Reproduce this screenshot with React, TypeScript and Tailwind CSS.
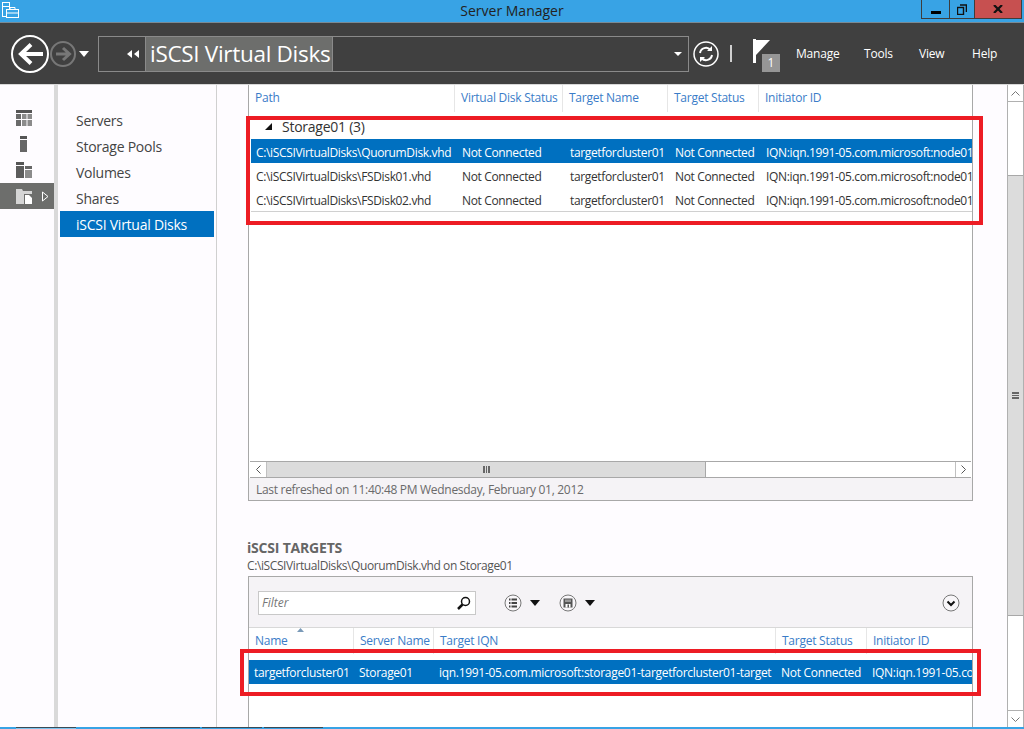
import React from "react";

const F = { fontFamily: '"Open Sans","Noto Sans",sans-serif' };

const IQN = "IQN:iqn.1991-05.com.microsoft:node01.contoso.com";

function Row1({ path, selected }: { path: string; selected?: boolean }) {
  return (
    <div className={selected ? "flex h-6 pt-[3px] items-center bg-[#0070c0] text-white text-[12px] tracking-[-0.35px]" : "flex h-6 pt-[3px] items-center text-[#333333] text-[12px] tracking-[-0.35px]"}>
      <div className="w-[210px] shrink-0 pl-[5px] whitespace-nowrap overflow-hidden">{path}</div>
      <div className="w-[108px] shrink-0 pl-[1px] whitespace-nowrap overflow-hidden">Not Connected</div>
      <div className="w-[105px] shrink-0 pl-[1px] whitespace-nowrap overflow-hidden">targetforcluster01</div>
      <div className="w-[91px] shrink-0 pl-[1px] whitespace-nowrap overflow-hidden">Not Connected</div>
      <div className="flex-1 min-w-0 pl-[1px] whitespace-nowrap overflow-hidden">{IQN}</div>
    </div>
  );
}

function CircleIcon({ children }: { children: React.ReactNode }) {
  return (
    <svg width="18" height="18" viewBox="0 0 18 18" fill="none" className="block">
      <circle cx="9" cy="9" r="8" stroke="#777" strokeWidth="1" fill="#f8f6f9" />
      {children}
    </svg>
  );
}

const Caret = () => (
  <svg width="10" height="6" viewBox="0 0 10 6" className="block"><path d="M0 0h10L5 6z" fill="#111" /></svg>
);

export default function App() {
  return (
    <div style={F} className="w-[1024px] h-[729px] overflow-hidden flex flex-col bg-[#fefcff] relative">
      {/* Title bar */}
      <div className="h-[22px] bg-[#38a3e5] flex items-start relative shrink-0">
        <svg className="ml-[2px] mt-[2px]" width="17" height="16" viewBox="0 0 17 16" fill="none" stroke="#fff" strokeWidth="1">
          <rect x="0.5" y="0.5" width="7" height="4" />
          <rect x="0.5" y="4.5" width="7" height="10" />
          <rect x="4.5" y="7.5" width="12" height="8" fill="#38a3e5" />
          <path d="M8 7.500V5.500h5v2M4.500 11h12" />
        </svg>
        <div className="flex-1 text-center text-[14px] leading-[22px] text-[#222222] pl-[84px]">Server Manager</div>
        <div className="flex h-[19px] mr-[2px] border border-t-0 border-[#3d3d3d] shrink-0 w-[101px]">
          <div className="w-[28px] bg-[#38a3e5] border-r border-[#3d3d3d] flex items-end justify-center pb-[4px]">
            <div className="w-[10px] h-[3px] bg-black" />
          </div>
          <div className="w-[25px] bg-[#38a3e5] border-r border-[#3d3d3d] flex items-center justify-center">
            <svg width="10" height="11" viewBox="0 0 10 11" fill="none" stroke="#111"><rect x="0.500" y="3.500" width="6" height="7" strokeWidth="1.400" /><path d="M3 1h6.500v7" strokeWidth="1.600" /></svg>
          </div>
          <div className="flex-1 bg-[#c75050] flex items-center justify-center">
            <svg width="10" height="8" viewBox="0 0 10 8" stroke="#111" strokeWidth="2.200"><path d="M1 0l8 8M9 0L1 8" /></svg>
          </div>
        </div>
      </div>

      {/* Nav bar */}
      <div className="h-[62px] bg-[#404040] border-t border-[#7a8a94] flex items-center shrink-0 text-white">
        <svg className="ml-[11px]" width="38" height="38" viewBox="0 0 38 38" fill="none">
          <circle cx="19" cy="19" r="18" stroke="#fff" strokeWidth="2" />
          <path d="M32 19H11M20 9.500 10 19l10 9.500" stroke="#fff" strokeWidth="4" />
        </svg>
        <svg className="ml-[1px]" width="26" height="26" viewBox="0 0 26 26" fill="none">
          <circle cx="13" cy="13" r="12" stroke="#777" strokeWidth="2" />
          <path d="M6 13h13M13 7l6.500 6-6.500 6" stroke="#777" strokeWidth="3" />
        </svg>
        <svg className="ml-[3px]" width="10" height="6" viewBox="0 0 10 6"><path d="M0 0h10L5 6z" fill="#fff" /></svg>
        <div className="ml-[9px] w-[591px] h-[36px] border border-[#8a8a8a] flex items-stretch">
          <div className="w-[47px] flex items-center justify-end pr-[5px] border-r border-[#8a8a8a]">
            <svg width="13" height="8" viewBox="0 0 13 8"><path d="M5 0v8L0 4zM12 0v8L7 4z" fill="#fff" /></svg>
          </div>
          <div className="w-[187px] bg-[#6d6e6c] text-[22.5px] leading-[34px] pl-[4px] whitespace-nowrap tracking-[-0.3px] text-white border-r border-[#8a8a8a]">iSCSI Virtual Disks</div>
          <div className="flex-1 flex items-center justify-end pr-[6px]">
            <svg width="8" height="4" viewBox="0 0 8 4"><path d="M0 0h8L4 4z" fill="#fff" /></svg>
          </div>
        </div>
        <svg className="ml-[4px]" width="26" height="26" viewBox="0 0 26 26" fill="none" stroke="#fff">
          <circle cx="13" cy="13" r="12" strokeWidth="1.500" />
          <path d="M7 12a6 6 0 0 1 10.500-3M19 14a6 6 0 0 1-10.500 3" strokeWidth="2" />
          <path d="M19 5v5h-5zM7 21v-5h5z" fill="#fff" stroke="none" />
        </svg>
        <div className="ml-[11px] w-[2px] h-[17px] bg-[#d0d0d0]" />
        <div className="ml-[21px] relative w-[28px] h-[36px] self-end mb-[9px]">
          <svg width="18" height="24" viewBox="0 0 18 24" className="absolute left-0 top-0">
            <rect width="3" height="24" x="0" y="0" fill="#fff" />
            <path d="M3 1h14L3 16z" fill="#fff" />
          </svg>
          <div className="absolute left-[9px] top-[15px] w-[18px] h-[18px] bg-[#969696] text-white text-[12px] leading-[18px] text-center">1</div>
        </div>
        <div className="ml-[15px] text-[12px] tracking-[-0.2px] w-[68px]">Manage</div>
        <div className="text-[12px] tracking-[-0.2px] w-[55px]">Tools</div>
        <div className="text-[12px] tracking-[-0.2px] w-[53px]">View</div>
        <div className="text-[12px] tracking-[-0.2px]">Help</div>
      </div>

      {/* Body */}
      <div className="flex flex-1 min-h-0 border-t border-[#d8d8d8]">
        {/* Rail */}
        <div className="w-[54px] pt-[20px] shrink-0 bg-[#fefcff]">
          <div className="h-[26px] pl-[16px] flex items-center">
            <svg width="16" height="16" viewBox="0 0 16 16"><path d="M0 0h16v3H0z" fill="#555" /><path d="M0 4h5v5H0zM0 10h5v6H0z" fill="#6a6a6a" /><path d="M6 4h4.500v5H6zM11.500 4H16v5h-4.500zM6 10h4.500v6H6zM11.500 10H16v6h-4.500z" fill="#8b8b8b" /></svg>
          </div>
          <div className="h-[26px] pl-[20px] flex items-center">
            <svg width="8" height="16" viewBox="0 0 8 16"><path d="M0 0h7v3H0z" fill="#555" /><path d="M0 4h7v12H0z" fill="#666" /></svg>
          </div>
          <div className="h-[26px] pl-[16px] flex items-center">
            <svg width="16" height="16" viewBox="0 0 16 16"><path d="M0 0h8v3H0z" fill="#555" /><path d="M0 4h8v12H0z" fill="#5c5c5c" /><path d="M9 4h7v3H9z" fill="#666" /><path d="M9 8h7v8H9z" fill="#8b8b8b" /></svg>
          </div>
          <div className="h-[26px] bg-[#6d6e6c] pl-[16px] pr-[5px] flex items-center justify-between">
            <svg width="16" height="16" viewBox="0 0 16 16"><path d="M0 1h6l1 2h9v3H8v10H0z" fill="#d5d5d5" /><path d="M9 7h4l3 3v6H9z" fill="#fff" /></svg>
            <svg width="7" height="11" viewBox="0 0 7 11" fill="none" stroke="#fff"><path d="M.500 1 6 5.500.500 10z" /></svg>
          </div>
        </div>
        <div className="w-[4px] bg-[#d9d9d9] shrink-0" />
        {/* Sidebar */}
        <div className="w-[159px] pt-[22px] pl-[2px] pr-[2px] border-r border-[#d0d0d0] shrink-0 text-[14px] tracking-[-0.25px] text-[#444444]">
          <div className="h-[26px] pl-[16px] leading-[28px]">Servers</div>
          <div className="h-[26px] pl-[16px] leading-[28px]">Storage Pools</div>
          <div className="h-[26px] pl-[16px] leading-[28px]">Volumes</div>
          <div className="h-[26px] pl-[16px] leading-[28px]">Shares</div>
          <div className="h-[26px] pl-[16px] leading-[28px] bg-[#0070c0] text-white">iSCSI Virtual Disks</div>
        </div>

        {/* Content */}
        <div className="flex-1 min-w-0 flex">
          <div className="flex-1 min-w-0 pl-[31px] pr-[34px]">
            {/* Panel 1 */}
            <div className="h-[416px] border-x border-b border-[#a8a8a8] flex flex-col bg-white">
              <div className="h-[27px] flex items-center text-[12px] tracking-[-0.25px] text-[#3a7cc8] shrink-0">
                <div className="w-[206px] pl-[6px] h-full leading-[26px] border-r border-[#e6e6e6]">Path</div>
                <div className="w-[108px] pl-[6px] h-full leading-[26px] border-r border-[#e6e6e6] whitespace-nowrap">Virtual Disk Status</div>
                <div className="w-[105px] pl-[6px] h-full leading-[26px] border-r border-[#e6e6e6]">Target Name</div>
                <div className="w-[91px] pl-[6px] h-full leading-[26px] border-r border-[#e6e6e6]">Target Status</div>
                <div className="pl-[6px] h-full leading-[26px]">Initiator ID</div>
              </div>
              <div className="h-[27px] flex items-center pl-[16px] pt-[1px] text-[14px] text-[#333333] tracking-[-0.25px] shrink-0">
                <svg width="7" height="7" viewBox="0 0 7 7"><path d="M7 0v7H0z" fill="#111" /></svg>
                <span className="ml-[10px]">Storage01 (3)</span>
              </div>
              <div className="pl-[2px] shrink-0">
                <Row1 path="C:\iSCSIVirtualDisks\QuorumDisk.vhd" selected />
                <Row1 path="C:\iSCSIVirtualDisks\FSDisk01.vhd" />
                <Row1 path="C:\iSCSIVirtualDisks\FSDisk02.vhd" />
                <div className="h-px bg-[#d0d0d0]" />
              </div>
              <div className="flex-1" />
              {/* H scrollbar */}
              <div className="h-[17px] mx-[1px] border-y border-[#a8a8a8] flex shrink-0 bg-white">
                <div className="w-[17px] border-r border-[#c0c0c0] flex items-center justify-center">
                  <svg width="5" height="9" viewBox="0 0 5 9" fill="none" stroke="#555"><path d="M4.500.500l-4 4 4 4" /></svg>
                </div>
                <div className="w-[439px] bg-[#dcdcdc] border-r border-[#a8a8a8] flex items-center justify-center">
                  <div className="w-[7px] h-[7px] border-x-2 border-[#666] flex justify-center"><div className="w-px h-full bg-[#666]" /></div>
                </div>
                <div className="flex-1" />
                <div className="w-[16px] border-l border-[#c0c0c0] flex items-center justify-center">
                  <svg width="5" height="9" viewBox="0 0 5 9" fill="none" stroke="#555"><path d="M.500.500l4 4-4 4" /></svg>
                </div>
              </div>
              <div className="h-[22px] bg-[#f5f3f6] pl-[7px] text-[12px] tracking-[-0.3px] leading-[24px] text-[#6a6a6a] shrink-0">
                Last refreshed on 11:40:48 PM Wednesday, February 01, 2012
              </div>
            </div>

            {/* Targets */}
            <div className="mt-[37px] text-[14px] font-bold leading-[20px] tracking-[-0.2px] text-[#666666] -ml-[1px]">iSCSI TARGETS</div>
            <div className="text-[12px] tracking-[-0.4px] leading-[15px] text-[#555555] mb-[3px] -ml-[1px]">C:\iSCSIVirtualDisks\QuorumDisk.vhd on Storage01</div>
            <div className="border border-b-0 border-[#a8a8a8] h-[160px] bg-white">
              <div className="h-[51px] bg-[#f5f3f6] border-b border-[#d8d8d8] flex items-center pl-[9px] pr-[12px] pt-[2px]">
                <div className="w-[218px] h-[24px] bg-white border border-[#c8c8c8] flex items-center justify-between pl-[3px] pr-[4px] italic text-[12px] text-[#777777]">
                  Filter
                  <svg width="14" height="14" viewBox="0 0 14 14" fill="none" stroke="#111"><circle cx="8.500" cy="5.500" r="4" strokeWidth="1.500" /><path d="M5.500 8.500 1 13" strokeWidth="2.500" /></svg>
                </div>
                <div className="ml-[28px]"><CircleIcon><path d="M5 5.500h1.500M5 9h1.500M5 12.500h1.500M7.500 5.500H13M7.500 9H13M7.500 12.500H13" stroke="#444" strokeWidth="1.800" /></CircleIcon></div>
                <div className="ml-[8px]"><Caret /></div>
                <div className="ml-[19px]"><CircleIcon><path d="M4.500 4.500h9v9h-9z" fill="#555" /><path d="M6 5.500h6v2.500H6z" fill="#999" /><path d="M6.500 10h5v3.500h-5z" fill="#fff" /><path d="M8.500 10.500h1.500v3H8.500z" fill="#555" /></CircleIcon></div>
                <div className="ml-[8px]"><Caret /></div>
                <div className="ml-auto">
                  <CircleIcon><path d="M5.500 7.500 9 11l3.500-3.500" stroke="#111" strokeWidth="2" /></CircleIcon>
                </div>
              </div>
              <div className="flex h-[26px] text-[12px] tracking-[-0.25px] text-[#3a7cc8] relative">
                <div className="w-[105px] pl-[6px] leading-[26px] border-r border-[#e6e6e6]">Name</div>
                <svg className="absolute left-[48px] top-0" width="7" height="4" viewBox="0 0 7 4"><path d="M3.500 0 7 4H0z" fill="#7a9ab8" /></svg>
                <div className="w-[80px] pl-[6px] leading-[26px] border-r border-[#e6e6e6] whitespace-nowrap">Server Name</div>
                <div className="w-[342px] pl-[6px] leading-[26px] border-r border-[#e6e6e6]">Target IQN</div>
                <div className="w-[91px] pl-[6px] leading-[26px] border-r border-[#e6e6e6]">Target Status</div>
                <div className="pl-[6px] leading-[26px]">Initiator ID</div>
              </div>
              <div className="mt-[6px] flex h-6 pt-[2px] items-center bg-[#0070c0] text-white text-[12px] tracking-[-0.3px]">
                <div className="w-[110px] shrink-0 pl-[5px] whitespace-nowrap overflow-hidden">targetforcluster01</div>
                <div className="w-[80px] shrink-0 whitespace-nowrap overflow-hidden">Storage01</div>
                <div className="w-[342px] shrink-0 whitespace-nowrap overflow-hidden">iqn.1991-05.com.microsoft:storage01-targetforcluster01-target</div>
                <div className="w-[91px] shrink-0 whitespace-nowrap overflow-hidden">Not Connected</div>
                <div className="flex-1 min-w-0 whitespace-nowrap overflow-hidden">IQN:iqn.1991-05.com.microsoft</div>
              </div>
            </div>
          </div>

          {/* V scrollbar */}
          <div className="w-[17px] border-x border-[#b0b0b0] flex flex-col shrink-0 bg-white">
            <div className="h-[17px] border-b border-[#b0b0b0] flex items-center justify-center">
              <svg width="9" height="5" viewBox="0 0 9 5" fill="none" stroke="#777"><path d="M.500 4.500l4-4 4 4" /></svg>
            </div>
            <div className="h-[73px]" />
            <div className="h-[441px] bg-[#dcdcdc] border-y border-[#a8a8a8] flex items-center justify-center">
              <div className="w-[7px] h-[7px] border-y-2 border-[#666] flex items-center"><div className="h-px w-full bg-[#666]" /></div>
            </div>
            <div className="flex-1" />
            <div className="h-[17px] border-t border-[#b0b0b0] flex items-center justify-center">
              <svg width="9" height="5" viewBox="0 0 9 5" fill="none" stroke="#777"><path d="M.500.500l4 4 4-4" /></svg>
            </div>
          </div>
        </div>
      </div>

      {/* Taskbar edge */}
      <div className="h-[2px] bg-[#38a3e5] shrink-0 flex">
        <div className="ml-[16px] w-[60px] bg-[#7cc4ef] border-t border-[#3a4a55]" />
        <div className="ml-[64px] w-[60px] border-t border-[#3a4a55]" />
        <div className="ml-[2px] w-[60px] border-t border-[#3a4a55]" />
        <div className="ml-[2px] w-[59px] border-t border-[#3a4a55]" />
      </div>

      {/* Highlight rectangles drawn over the screenshot */}
      <div className="absolute left-[246px] top-[116px] w-[737px] h-[109px] border-4 border-[#ed1c24] pointer-events-none" />
      <div className="absolute left-[240px] top-[649px] w-[741px] h-[47px] border-4 border-[#ed1c24] pointer-events-none" />
    </div>
  );
}
